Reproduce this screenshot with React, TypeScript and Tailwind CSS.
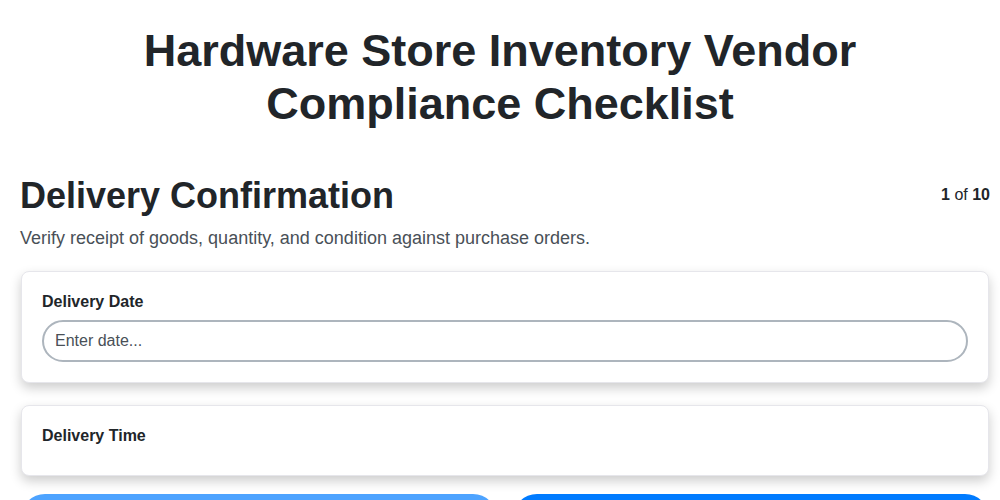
import React from "react";

const Field = ({ label, children }: { label: string; children?: React.ReactNode }) => (
  <div className="mx-px mb-[22px] rounded-lg border border-[#e6e6eb] bg-white p-5 shadow-[0_5px_12px_rgba(0,0,0,0.2)]">
    <label className="mb-2 block text-base font-bold leading-[1.25] text-[#212529]">{label}</label>
    {children}
  </div>
);

export default function App() {
  return (
    <div className="min-h-screen bg-white pl-5 pr-[10px] pt-6 font-['Liberation_Sans',Arial,sans-serif] text-[#212529]">
      <div className="mr-[10px]">
        <h1 className="mx-auto max-w-[800px] text-center text-[45px] font-bold leading-[53px]">
          Hardware Store Inventory Vendor Compliance Checklist
        </h1>
      </div>

      <div className="mt-[44px] flex items-start justify-between">
        <h2 className="text-[36px] font-bold leading-[1.2]">Delivery Confirmation</h2>
        <div className="pt-[9px] text-base">
          <span className="font-bold">1</span> of <span className="font-bold">10</span>
        </div>
      </div>
      <p className="mt-[10px] mb-5 text-[18px] leading-[1.3] text-[#495057]">
        Verify receipt of goods, quantity, and condition against purchase orders.
      </p>

      <Field label="Delivery Date">
        <input
          type="text"
          placeholder="Enter date..."
          className="block h-[42px] w-full rounded-full border-2 border-[#adb5bd] px-[11px] text-base text-[#212529] outline-none placeholder:text-[#495057]"
        />
      </Field>

      <Field label="Delivery Time">
        <div className="h-px" />
      </Field>

      <div className="-mt-1 mx-px grid grid-cols-2 gap-4">
        <button className="h-12 rounded-full bg-[#4da3ff] text-base font-bold text-white">Previous</button>
        <button className="h-12 rounded-full bg-[#007bff] text-base font-bold text-white">Next</button>
      </div>
    </div>
  );
}
